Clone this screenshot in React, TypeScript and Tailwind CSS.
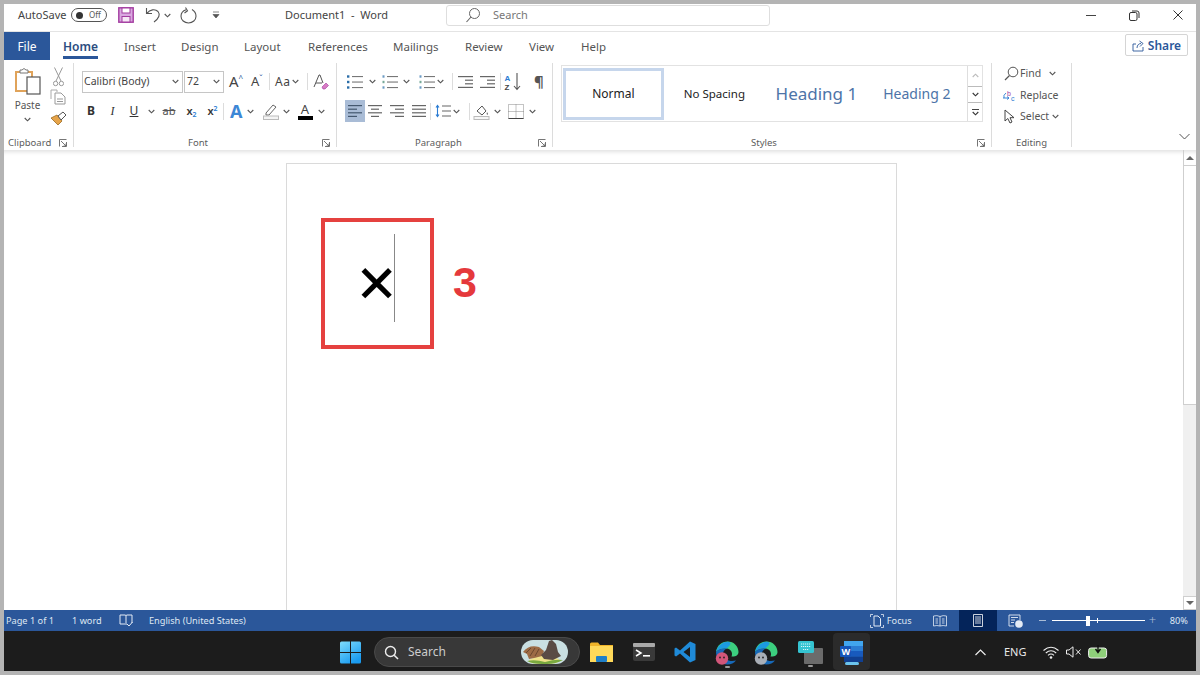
import type { ReactNode } from "react";

const sans = "font-['Noto_Sans',sans-serif]";

function Chev({ color = "#555", className = "" }: { color?: string; className?: string }) {
  return (
    <svg width="7" height="5" viewBox="0 0 7 5" className={className}>
      <path d="M0.7 1 L3.5 3.8 L6.3 1" fill="none" stroke={color} strokeWidth="1.1" />
    </svg>
  );
}

function Launcher() {
  return (
    <svg width="8" height="8" viewBox="0 0 8 8">
      <path d="M0.5 7.5 V0.5 H7.5 M7.5 3 V7.5 H3 M2 2 L7 7 M4.5 7 H7 V4.5" fill="none" stroke="#666" strokeWidth="0.9" />
    </svg>
  );
}

function Lines({ widths, color = "#666" }: { widths: number[][]; color?: string }) {
  return (
    <svg width="16" height="14" viewBox="0 0 16 14">
      {widths.map(([x, w], i) => (
        <rect key={i} x={x} y={1 + i * 3.6} width={w} height="1.2" fill={color} />
      ))}
    </svg>
  );
}

function Group({ label, className, children, labelClass = "justify-center", launcher = true }: {
  label: string;
  className: string;
  children: ReactNode;
  labelClass?: string;
  launcher?: boolean;
}) {
  return (
    <div className={`my-[3px] flex h-[84px] flex-col border-r border-[#dcdcdc] ${className}`}>
      <div className="flex-1">{children}</div>
      <div className={`mb-[-2px] flex h-[13px] items-center text-[9.5px] leading-none text-[#5c5c5c] ${labelClass}`}>
        <span>{label}</span>
        {launcher && (
          <span className="ml-auto mr-[6px] flex">
            <Launcher />
          </span>
        )}
      </div>
    </div>
  );
}

function TitleBar() {
  return (
    <div className="flex h-[28px] shrink-0 items-center border-b border-[#e4e4e4] bg-white pb-[5px] pl-[14px] text-[11px] text-[#444]">
      <span className="w-[53px]">AutoSave</span>
      <div className="flex h-[14px] w-[36px] items-center rounded-full border border-[#555] pl-[4px]">
        <span className="h-[7px] w-[7px] rounded-full bg-[#333]" />
        <span className="ml-[6px] text-[8px] leading-none text-[#555]">Off</span>
      </div>
      <svg width="16" height="16" viewBox="0 0 16 16" className="ml-[11px]">
        <rect x="0.8" y="0.8" width="14.4" height="14.4" fill="#d9a8e0" stroke="#a23b9f" strokeWidth="1.4" />
        <rect x="4" y="1" width="8" height="5" fill="#fff" stroke="#a23b9f" />
        <rect x="4" y="9.5" width="8" height="5.5" fill="#f6e7f6" stroke="#a23b9f" />
      </svg>
      <svg width="16" height="16" viewBox="0 0 16 16" className="ml-[11px]">
        <path d="M1.5 1 V6.5 H7 M1.8 6.3 C5 2.5 10 1.5 13 4.5 C15.5 7.5 14 11.5 9 15" fill="none" stroke="#555" strokeWidth="1.1" />
      </svg>
      <Chev className="ml-[3px]" />
      <svg width="17" height="17" viewBox="0 0 17 17" className="ml-[9px]">
        <path d="M6 2.8 C2.5 4 1 7 1 9.2 C1 13 4.3 16 8.5 16 C12.7 16 16 13 16 9.2 C16 6.5 14.5 4 12 2.5 M5.5 0.5 L7.5 3.8 L4.5 6" fill="none" stroke="#555" strokeWidth="1.1" />
      </svg>
      <svg width="8" height="8" viewBox="0 0 8 8" className="ml-[15px]">
        <path d="M1 1 H7 M1 3.5 H7 L4 7 Z" fill="#555" stroke="#555" strokeWidth="0.7" />
      </svg>
      <span className="ml-[65px] w-[161px]">Document1&nbsp; -&nbsp; Word</span>
      <div className="flex h-[21px] w-[324px] items-center rounded-[3px] border border-[#dedede] pl-[18px]">
        <svg width="16" height="16" viewBox="0 0 16 16">
          <circle cx="9.5" cy="6.5" r="5" fill="none" stroke="#666" strokeWidth="1" />
          <path d="M6 10 L1.5 15" stroke="#666" strokeWidth="1.1" />
        </svg>
        <span className="ml-[12px] text-[#777]">Search</span>
      </div>
      <div className="ml-auto flex items-center pr-[13px]">
        <div className="h-px w-[10px] bg-[#444]" />
        <svg width="11" height="11" viewBox="0 0 11 11" className="ml-[33px]">
          <rect x="0.5" y="2.5" width="7.5" height="8" rx="1.5" fill="#fff" stroke="#333" />
          <path d="M3 1 H8 Q10 1 10 3 V8" fill="none" stroke="#333" />
        </svg>
        <svg width="10" height="10" viewBox="0 0 10 10" className="ml-[33px]">
          <path d="M0.5 0.5 L9.5 9.5 M9.5 0.5 L0.5 9.5" stroke="#333" strokeWidth="1" />
        </svg>
      </div>
    </div>
  );
}

const tabs = [
  { name: "Insert", w: "w-[57px]" },
  { name: "Design", w: "w-[63px]" },
  { name: "Layout", w: "w-[64px]" },
  { name: "References", w: "w-[85px]" },
  { name: "Mailings", w: "w-[72px]" },
  { name: "Review", w: "w-[64px]" },
  { name: "View", w: "w-[52px]" },
  { name: "Help", w: "w-[52px]" },
];

function TabRow() {
  return (
    <div className="flex h-[28px] shrink-0 items-stretch bg-white text-[11.5px] text-[#555]">
      <div className="flex w-[46px] items-center justify-center bg-[#2b579a] pt-px text-[12px] text-white">File</div>
      <div className="ml-[13px] w-[61px] pt-[6px]">
        <div className="h-[18px] text-[12px] font-semibold leading-[18px] text-[#2b4c80]">Home</div>
        <div className="h-[2.5px] w-[35px] bg-[#2b579a]" />
      </div>
      {tabs.map((t) => (
        <div key={t.name} className={`flex items-center pt-px ${t.w}`}>
          {t.name}
        </div>
      ))}
      <div className="ml-auto mr-[8px] mt-[2px] flex h-[22px] w-[63px] items-center justify-center gap-[4px] self-start rounded-[2px] border border-[#d5d5d5] pt-px text-[12px] font-semibold text-[#2b579a]">
        <svg width="12" height="12" viewBox="0 0 12 12">
          <path d="M4 4 H1 V11 H11 V7 M5 8 C5 5 7 3.5 9 3.5 M7.5 1 L11 3.5 L8 6.5" fill="none" stroke="#2b579a" strokeWidth="0.9" />
        </svg>
        Share
      </div>
    </div>
  );
}

function ClipboardGroup() {
  return (
    <Group label="Clipboard" className="w-[70px]" labelClass="pl-[4px]">
      <div className="flex">
        <div className="ml-[9px] flex w-[29px] flex-col items-center pt-[4px]">
          <svg width="27" height="28" viewBox="0 0 27 28">
            <path d="M2 5 H18 V24 H2 Z" fill="#fff" stroke="#e0a35a" strokeWidth="2" />
            <path d="M6 6 V3 H8 Q10 0 12 3 H14 V6 Z" fill="#fff" stroke="#777" />
            <rect x="13" y="10" width="13" height="17" fill="#fff" stroke="#555" strokeWidth="1.2" />
          </svg>
          <span className="mt-[3px] text-[10px] leading-[14px] text-[#555]">Paste</span>
          <Chev className="mt-[5px]" />
        </div>
        <div className="ml-[7px] flex w-[18px] flex-col items-center pt-[4px]">
          <svg width="11" height="20" viewBox="0 0 11 20">
            <path d="M1.5 0.5 L8 14 M9.5 0.5 L3 14" stroke="#999" strokeWidth="1" fill="none" />
            <circle cx="2.6" cy="16.5" r="2.2" fill="none" stroke="#999" />
            <circle cx="8.4" cy="16.5" r="2.2" fill="none" stroke="#999" />
          </svg>
          <svg width="16" height="16" viewBox="0 0 16 16" className="mt-[2px]">
            <path d="M1 10 V1 H7 V3" fill="none" stroke="#aaa" />
            <path d="M5 4 H11 L15 8 V15 H5 Z M7 10 H13 M7 12.5 H13" fill="#fff" stroke="#999" />
          </svg>
          <svg width="17" height="15" viewBox="0 0 17 15" className="mt-[6px]">
            <path d="M1 7 L7 4 L12 10 L8 14 Z" fill="#e6a44a" stroke="#9a6a20" strokeWidth="0.8" />
            <path d="M8 5 L13 1 L16 4 L11 9 Z" fill="#fff" stroke="#555" />
          </svg>
        </div>
      </div>
    </Group>
  );
}

function FontGroup() {
  return (
    <Group label="Font" className="w-[263px]" labelClass="justify-start pl-[114px]">
      <div className="box-content flex h-[21px] items-center pl-[8px] pt-[8px]">
        <div className="flex h-[22px] w-[101px] items-center justify-between border border-[#c6c6c6] pl-[1px] pr-[3px] text-[10.5px] text-[#444]">
          Calibri (Body) <Chev />
        </div>
        <div className="ml-[1px] flex h-[22px] w-[40px] items-center justify-between border border-[#c6c6c6] pl-[2px] pr-[3px] text-[10.5px] text-[#444]">
          72 <Chev />
        </div>
        <span className="ml-[5px] w-[22px] text-[15px] leading-none text-[#444]">
          A<span className="align-top text-[8px] text-[#2b579a]">^</span>
        </span>
        <span className="w-[18px] text-[13px] leading-none text-[#444]">
          A<span className="align-top text-[8px] text-[#2b579a]">ˇ</span>
        </span>
        <div className="h-[17px] w-px bg-[#dcdcdc]" />
        <span className="ml-[5px] flex w-[32px] items-center gap-[2px] text-[12px] tracking-[0.5px] text-[#444]">
          Aa <Chev />
        </span>
        <div className="h-[17px] w-px bg-[#dcdcdc]" />
        <svg width="16" height="16" viewBox="0 0 16 16" className="ml-[5px]">
          <path d="M1 13 L6 1 H7 L10 9 M3 9 H9" fill="none" stroke="#555" />
          <path d="M9 13 L13 9 L15.5 11.5 L12 15 H10 Z" fill="#d77cc4" stroke="#a23b9f" strokeWidth="0.6" />
        </svg>
      </div>
      <div className="mt-[8px] flex h-[22px] items-center pl-[7px] text-[12px] text-[#333]">
        <span className="w-[20px] text-center font-bold">B</span>
        <span className="ml-px w-[21px] text-center font-['Liberation_Serif',serif] italic">I</span>
        <span className="w-[22px] text-center underline">U</span>
        <span className="flex w-[12px] justify-center"><Chev /></span>
        <span className="w-[24px] text-center text-[11px] text-[#555] line-through">ab</span>
        <span className="w-[21px] text-center text-[11px] font-semibold">
          x<sub className="text-[7px] text-[#2b7cd3]">2</sub>
        </span>
        <span className="w-[21px] text-center text-[11px] font-semibold">
          x<sup className="text-[7px] text-[#2b7cd3]">2</sup>
        </span>
        <div className="h-[17px] w-px bg-[#dcdcdc]" />
        <span className="ml-[6px] w-[15px] text-[18px] font-bold leading-none text-[#3d87d6]">A</span>
        <span className="ml-[2px] flex w-[16px]"><Chev /></span>
        <svg width="16" height="17" viewBox="0 0 16 17">
          <path d="M3 10 L10 2 L13 4 L6 12 L3 12 Z" fill="#fff" stroke="#666" />
          <rect x="0.5" y="13" width="15" height="3.5" fill="#f4f4f4" stroke="#bbb" />
        </svg>
        <span className="ml-[4px] w-[13px]"><Chev /></span>
        <span className="flex w-[18px] flex-col items-center">
          <span className="text-[13px] leading-[13px] text-[#444]">A</span>
          <span className="h-[4px] w-[15px] bg-black" />
        </span>
        <span className="flex w-[15px] justify-center"><Chev /></span>
      </div>
    </Group>
  );
}

function BulletIcon({ marks }: { marks: string }) {
  return (
    <svg width="16" height="14" viewBox="0 0 16 14">
      {[1.5, 7, 12.5].map((y, i) => (
        <g key={y}>
          {marks === "dot" ? (
            <rect x="0" y={y - 1.2} width="2.4" height="2.4" fill="#2b6ea8" />
          ) : (
            <rect x="0.5" y={y - 1.2} width="2" height="2.4" fill={i === 1 ? "#7a9" : "#6b9ac4"} />
          )}
          <rect x="5" y={y - 0.5} width="11" height="1.1" fill="#777" />
        </g>
      ))}
    </svg>
  );
}

function ParagraphGroup() {
  return (
    <Group label="Paragraph" className="w-[216px]" labelClass="pl-[78px]">
      <div className="box-content flex h-[21px] items-center pl-[10px] pt-[8px]">
        <BulletIcon marks="dot" />
        <span className="ml-[6px] w-[13px]"><Chev /></span>
        <BulletIcon marks="num" />
        <span className="ml-[5px] w-[16px]"><Chev /></span>
        <BulletIcon marks="num" />
        <span className="ml-[2px] w-[15px]"><Chev /></span>
        <div className="h-[17px] w-px bg-[#dcdcdc]" />
        <span className="ml-[5px] flex w-[22px]">
          <Lines widths={[[0, 15], [7, 8], [7, 8], [0, 15]]} />
        </span>
        <span className="flex w-[20px]">
          <Lines widths={[[0, 15], [7, 8], [7, 8], [0, 15]]} />
        </span>
        <div className="h-[17px] w-px bg-[#dcdcdc]" />
        <svg width="18" height="20" viewBox="0 0 18 20" className="ml-[3px] font-['Liberation_Sans',sans-serif]">
          <text x="0.5" y="8.5" fontSize="8" fontWeight="700" fill="#2b7cd3">A</text>
          <text x="0.5" y="18" fontSize="8" fontWeight="700" fill="#444">Z</text>
          <path d="M13 1 V17 M10 14 L13 17.5 L16 14" fill="none" stroke="#555" strokeWidth="1.1" />
        </svg>
        <span className="ml-[12px] text-[15px] font-bold leading-none text-[#555]">¶</span>
      </div>
      <div className="mt-[8px] flex h-[22px] items-center pl-[8px]">
        <span className="flex h-[22px] w-[20px] items-center justify-center bg-[#a9bcd6]">
          <Lines widths={[[1, 14], [1, 9], [1, 14], [1, 9]]} color="#44586f" />
        </span>
        <span className="ml-[2px] w-[20px]"><Lines widths={[[1, 14], [4, 8], [1, 14], [4, 8]]} /></span>
        <span className="ml-[2px] w-[20px]"><Lines widths={[[1, 14], [6, 9], [1, 14], [6, 9]]} /></span>
        <span className="ml-[2px] w-[19px]"><Lines widths={[[1, 14], [1, 14], [1, 14], [1, 14]]} /></span>
        <div className="h-[17px] w-px bg-[#dcdcdc]" />
        <span className="ml-[4px] flex w-[18px] items-center">
          <svg width="16" height="14" viewBox="0 0 16 14">
            <path d="M2.5 2 V12 M1 3.5 L2.5 1.5 L4 3.5 M1 10.5 L2.5 12.5 L4 10.5" fill="none" stroke="#2b7cd3" strokeWidth="1.1" />
            <path d="M7 2 H16 M7 7 H16 M7 12 H16" stroke="#666" strokeWidth="1.2" />
          </svg>
        </span>
        <Chev />
        <div className="ml-[9px] h-[17px] w-px bg-[#dcdcdc]" />
        <svg width="17" height="17" viewBox="0 0 17 17" className="ml-[3px]">
          <path d="M4 8 L9 3 L13 8 L9 12 Z" fill="#fff" stroke="#555" />
          <path d="M14 9 Q15.5 11 14.5 12 Q13 11.5 14 9" fill="#555" />
          <rect x="1" y="13.5" width="15" height="3" fill="#f6f6f6" stroke="#bbb" />
        </svg>
        <span className="ml-[4px] w-[14px]"><Chev /></span>
        <svg width="16" height="15" viewBox="0 0 16 15">
          <rect x="0.5" y="0.5" width="15" height="14" fill="none" stroke="#888" strokeDasharray="1 1" />
          <path d="M8 0.5 V14.5 M0.5 7.5 H15.5" stroke="#888" strokeDasharray="1 1" />
          <path d="M0.5 14.5 H15.5" stroke="#444" />
        </svg>
        <span className="ml-[5px]"><Chev /></span>
      </div>
    </Group>
  );
}

function StylesGroup() {
  return (
    <Group label="Styles" className="w-[439px]" labelClass="pl-[198px]">
      <div className="ml-[8px] mt-[2px] flex h-[57px] w-[422px] items-center border border-[#e2e2e2] pl-px">
        <div className="flex h-[52px] w-[101px] items-center justify-center border-[3px] border-[#c6d6ec] text-[12px] text-[#222]">
          Normal
        </div>
        <span className="ml-[20px] w-[92px] text-[11.5px] text-[#222]">No Spacing</span>
        <span className="w-[108px] text-[17px] text-[#4d74a8]">Heading 1</span>
        <span className="w-[84px] text-[14px] text-[#4d74a8]">Heading 2</span>
        <div className="flex w-[15px] flex-col self-stretch border-l border-[#dedede]">
          <span className="flex h-[20px] items-center justify-center"><Chev color="#bbb" className="rotate-180" /></span>
          <span className="flex h-[18px] items-center justify-center border-y border-[#bbb]"><Chev color="#333" /></span>
          <span className="flex h-[18px] flex-col items-center justify-center">
            <span className="mb-px h-px w-[7px] bg-[#444]" />
            <Chev color="#333" />
          </span>
        </div>
      </div>
    </Group>
  );
}

function EditingGroup() {
  return (
    <Group label="Editing" className="w-[80px]" launcher={false}>
      <div className="pl-[10px] text-[10.5px] leading-[21.5px] text-[#555]">
        <div className="flex h-[21.5px] items-center">
          <svg width="15" height="15" viewBox="0 0 15 15" className="ml-[2px]">
            <circle cx="9" cy="6" r="4.8" fill="none" stroke="#555" />
            <path d="M5.5 9.5 L1 14" stroke="#555" strokeWidth="1.2" />
          </svg>
          <span className="ml-px w-[29px]">Find</span>
          <Chev />
        </div>
        <div className="flex h-[21.5px] items-center">
          <svg width="15" height="15" viewBox="0 0 15 15" className="font-['Liberation_Sans',sans-serif]">
            <text x="5" y="7.5" fontSize="7" fill="#a23b9f">b</text>
            <text x="9" y="13" fontSize="7" fill="#2b7cd3">c</text>
            <path d="M4 5 Q1 7 2 10 M1 10 H7 M5 8.5 L7 10 L5 11.5" fill="none" stroke="#2b7cd3" strokeWidth="0.9" />
          </svg>
          <span className="ml-[3px]">Replace</span>
        </div>
        <div className="flex h-[21.5px] items-center">
          <svg width="12" height="15" viewBox="0 0 12 15" className="ml-[2px]">
            <path d="M1 1 V12 L3.8 9.5 L6 14 L8 13 L6 8.7 H10 Z" fill="#fff" stroke="#444" />
          </svg>
          <span className="ml-[4px] mr-[3px]">Select</span>
          <Chev />
        </div>
      </div>
    </Group>
  );
}

function Ribbon() {
  return (
    <div className="flex h-[90px] shrink-0 bg-white text-[#444]">
      <ClipboardGroup />
      <FontGroup />
      <ParagraphGroup />
      <StylesGroup />
      <EditingGroup />
      <div className="ml-auto mr-[6px] flex items-end pb-[10px]">
        <svg width="11" height="7" viewBox="0 0 11 7">
          <path d="M0.5 1 L5.5 6 L10.5 1" fill="none" stroke="#555" />
        </svg>
      </div>
    </div>
  );
}

function DocArea() {
  return (
    <div className="flex h-[460px] shrink-0 bg-white shadow-[inset_0_5px_4px_-3px_rgba(0,0,0,0.12)]">
      <div className="ml-[282px] mt-[13px] w-[611px] border-x border-t border-[#dadada] pl-[34px] pt-[54px]">
        <div className="flex items-start">
          <div className="flex h-[131px] w-[113px] shrink-0 items-start border-4 border-[#e5413f] pl-[34px] pt-[12px]">
            <span className="flex h-[88px] w-[35px] items-center justify-center font-['Inter',sans-serif] text-[66px] font-normal leading-none text-black">
              ×
            </span>
            <span className="h-[88px] w-px bg-[#888]" />
          </div>
          <span className="ml-[19px] mt-[39px] font-['Liberation_Sans',sans-serif] text-[43px] font-bold leading-[50px] text-[#e5393c]">
            3
          </span>
        </div>
      </div>
      <div className="ml-auto flex w-[13px] flex-col">
        <div className="flex h-[16px] items-center justify-center border-b border-l border-[#cfcfcf]">
          <span className="h-0 w-0 border-x-[4px] border-b-[4px] border-x-transparent border-b-[#666]" />
        </div>
        <div className="h-[239px] border-b border-l border-[#cfcfcf] bg-white" />
        <div className="flex-1 bg-[#f0f0f0]" />
        <div className="flex h-[14px] items-center justify-center border border-r-0 border-[#cfcfcf] bg-white">
          <span className="h-0 w-0 border-x-[4px] border-t-[4px] border-x-transparent border-t-[#666]" />
        </div>
      </div>
    </div>
  );
}

function StatusBar() {
  return (
    <div className="flex h-[21px] shrink-0 items-center bg-[#2b579a] pl-[2px] text-[9.2px] text-[#dfe7f3]">
      <span className="w-[66px]">Page 1 of 1</span>
      <span className="w-[47px]">1 word</span>
      <svg width="14" height="13" viewBox="0 0 14 13">
        <path d="M1 1 H6 Q7 1 7 2 Q7 1 8 1 H13 V9 M7 2 V11 M1 1 V10 H6" fill="none" stroke="#e4ebf5" />
        <path d="M8 10 L10 12 L13.5 8" fill="none" stroke="#e4ebf5" />
      </svg>
      <span className="ml-[16px]">English (United States)</span>
      <div className="ml-auto flex h-full items-center">
        <svg width="14" height="14" viewBox="0 0 14 14">
          <path d="M0.5 3 V0.5 H3 M11 0.5 H13.5 V3 M0.5 11 V13.5 H3 M11 13.5 H13.5 V11" fill="none" stroke="#e4ebf5" strokeWidth="0.8" />
          <path d="M4 2 H8 L10.5 4.5 V12 H4 Z" fill="none" stroke="#e4ebf5" />
        </svg>
        <span className="ml-[3px] w-[46px]">Focus</span>
        <svg width="14" height="12" viewBox="0 0 14 12">
          <path d="M7 1.5 Q4 0 0.5 1 V11 Q4 10 7 11 Q10 10 13.5 11 V1 Q10 0 7 1.5 Z M7 1.5 V11 M2.5 4 H5 M2.5 6 H5 M2.5 8 H5 M9 4 H11.5 M9 6 H11.5 M9 8 H11.5" fill="none" stroke="#e4ebf5" strokeWidth="0.8" />
        </svg>
        <div className="ml-[12px] flex h-full w-[38px] items-center justify-center bg-[#04245a]">
          <svg width="10" height="13" viewBox="0 0 10 13">
            <path d="M0.5 0.5 H9.5 V12.5 H0.5 Z M2 3 H8 M2 5 H8 M2 7 H8 M2 9 H8" fill="none" stroke="#fff" strokeWidth="0.8" />
          </svg>
        </div>
        <svg width="15" height="14" viewBox="0 0 15 14" className="ml-[11px]">
          <path d="M6 12 H1 V1 H12 V6 M3 3.5 H10 M3 6 H7 M3 8.5 H6" fill="none" stroke="#e4ebf5" strokeWidth="0.9" />
          <circle cx="11" cy="10" r="3.8" fill="#e4ebf5" />
        </svg>
        <div className="ml-[16px] h-px w-[7px] bg-[#a9bcd6]" />
        <div className="ml-[6px] flex h-[10px] w-[93px] items-center">
          <div className="h-px w-[34px] bg-white" />
          <div className="h-[10px] w-[4px] bg-white" />
          <div className="h-px w-[7px] bg-white" />
          <div className="h-[5px] w-px bg-white" />
          <div className="h-px flex-1 bg-white" />
        </div>
        <span className="ml-[4px] w-[13px] text-[13px] font-light leading-none text-[#a9bcd6]">+</span>
        <span className="ml-[8px] mr-[8px]">80%</span>
      </div>
    </div>
  );
}

function EdgeIcon({ face }: { face: string }) {
  return (
    <svg width="24" height="24" viewBox="0 0 24 24">
      <path d="M1 11 C2 4 7 0.5 12.5 0.5 C19 0.5 23.5 5.5 23.5 11 C23.5 14.5 20 16 16.5 15.5 C18 12.5 16.5 8 11.5 7.5 C6.5 7 3 8.5 1 11 Z" fill="#3ccf7f" />
      <path d="M1 11 C3 3 10 0.2 14 0.9 C18 2 13 6 11.5 7.5 C6.5 7 3 8.5 1 11 Z" fill="#1c9be0" />
      <path d="M1 11 C1 18 6 23.5 12.5 23.5 C16 23.5 19 22 21 19.5 C15 21 9 19 8 14 C7.5 11 9 9 11.5 7.5 C6.5 7 3 8.5 1 11 Z" fill="#1769b8" />
      <circle cx="7" cy="17.5" r="6.2" fill={face} />
      <circle cx="5" cy="16.5" r="0.9" fill="#222" />
      <circle cx="9" cy="16.5" r="0.9" fill="#222" />
    </svg>
  );
}

function Taskbar() {
  return (
    <div className="flex h-[40px] shrink-0 items-center bg-[#1c1c1c] pt-[2px] text-[#e8e8e8]">
      <svg width="23" height="23" viewBox="0 0 23 23" className="ml-[335px]">
        <defs>
          <linearGradient id="win" x1="0" y1="0" x2="0.6" y2="1">
            <stop offset="0" stopColor="#7fdcfb" />
            <stop offset="1" stopColor="#1a9bf0" />
          </linearGradient>
        </defs>
        <path d="M1 2 Q1 0.5 2.5 0.5 H11 V11 H1 Z M12 0.5 H20.5 Q22 0.5 22 2 V11 H12 Z M1 12 H11 V22.5 H2.5 Q1 22.5 1 21 Z M12 12 H22 V21 Q22 22.5 20.5 22.5 H12 Z" fill="url(#win)" />
      </svg>
      <div className="ml-[12px] flex h-[30px] w-[206px] items-center rounded-full border border-[#4a4a4a] bg-[#383838] pl-[9px]">
        <svg width="15" height="15" viewBox="0 0 15 15">
          <circle cx="6.5" cy="6.5" r="5" fill="none" stroke="#eee" strokeWidth="1.4" />
          <path d="M10.2 10.2 L14 14" stroke="#eee" strokeWidth="1.6" />
        </svg>
        <span className="ml-[9px] text-[12px] text-[#ccc]">Search</span>
        <svg width="47" height="26" viewBox="0 0 47 26" className="ml-[75px]">
          <rect x="0" y="1" width="47" height="24" rx="12" fill="#c9dfe2" />
          <path d="M8 21 Q22 13 38 20 L36 24 Q22 26 10 24 Z" fill="#f0e28a" />
          <path d="M6 22 Q14 20 24 23 Q34 20 42 21 Q34 25.5 24 25 Q12 25.5 6 22" fill="#79a83f" />
          <path d="M2 13 Q8 5 18 8 L23 12 L21 17 Q14 19 8 20 L6 15 Z" fill="#9d6b45" />
          <path d="M5 14 L10 9 M9 17 L14 9 M14 17 L18 10" stroke="#5e3d28" strokeWidth="0.8" />
          <path d="M20 16 L25 11 L28 2 L31 1 L35 5 L37 13 L40 17 L32 21 L23 20 Z" fill="#5a4b45" />
        </svg>
      </div>
      <svg width="23" height="20" viewBox="0 0 23 20" className="ml-[10px]">
        <path d="M0 2 Q0 0.5 1.5 0.5 H8 L10 3 H23 V20 H0 Z" fill="#f0b429" />
        <rect x="0" y="4" width="23" height="16" fill="#ffd95a" />
        <rect x="6" y="14" width="11" height="6" rx="1" fill="#1f7fc8" />
      </svg>
      <svg width="22" height="18" viewBox="0 0 22 18" className="ml-[20px]">
        <rect width="22" height="18" rx="2" fill="#3a3a3a" />
        <rect width="22" height="4" rx="1" fill="#a9a9a9" />
        <path d="M3 7 L8 10 L3 13" fill="none" stroke="#fff" strokeWidth="1.5" />
        <rect x="10" y="12" width="7" height="1.6" fill="#fff" />
      </svg>
      <svg width="22" height="22" viewBox="0 0 22 22" className="ml-[19px]">
        <path d="M16 0.5 L21.5 3 V19 L16 21.5 L6 12.5 L2 15.5 L0.5 14.5 V7.5 L2 6.5 L6 9.5 Z M16 6 L9.5 11 L16 16 Z" fill="#1f8ad8" fillRule="evenodd" />
      </svg>
      <div className="ml-[19px] flex w-[24px] flex-col items-center pt-[5px]">
        <EdgeIcon face="#d2567a" />
        <span className="mt-[1px] h-[2.5px] w-[5px] rounded-full bg-[#9a9a9a]" />
      </div>
      <div className="ml-[15px] flex w-[24px] flex-col items-center pt-[5px]">
        <EdgeIcon face="#a9aeb6" />
        <span className="mt-[1px] h-[2.5px] w-[5px] rounded-full bg-transparent" />
      </div>
      <div className="ml-[20px] flex w-[25px] flex-col items-center pt-[4px]">
        <svg width="25" height="23" viewBox="0 0 25 23">
          <rect x="6" y="7" width="19" height="16" rx="1" fill="#6b6b6b" />
          <rect x="0" y="0" width="16" height="12" rx="1.5" fill="#35c4d2" />
          <path d="M3 3 H13 M3 5.5 H13 M5 8.5 H11" stroke="#d6f6fa" strokeWidth="1" strokeDasharray="1.2 0.8" />
        </svg>
        <span className="mt-[1px] h-[2.5px] w-[5px] rounded-full bg-[#9a9a9a]" />
      </div>
      <div className="ml-[10px] flex h-[37px] w-[37px] flex-col items-center self-start rounded-[4px] bg-[#2b2b2b] pt-[8px]">
        <svg width="23" height="21" viewBox="0 0 23 21">
          <rect x="4" y="0" width="19" height="21" rx="1.5" fill="#2b7cd3" />
          <rect x="4" y="0" width="19" height="5" fill="#41a5ee" />
          <rect x="4" y="10" width="19" height="5.5" fill="#185abd" />
          <rect x="4" y="15.5" width="19" height="5.5" fill="#103f91" />
          <rect x="0" y="5" width="11" height="11" rx="1" fill="#1454b8" />
          <text x="1.5" y="14" fontSize="9" fontWeight="700" fill="#fff">W</text>
        </svg>
        <span className="h-[3px] w-[14px] rounded-full bg-[#6cc4ee]" />
      </div>
      <svg width="11" height="7" viewBox="0 0 11 7" className="ml-[105px]">
        <path d="M0.5 6 L5.5 1 L10.5 6" fill="none" stroke="#eee" strokeWidth="1.2" />
      </svg>
      <span className="ml-[18px] text-[11px]">ENG</span>
      <svg width="16" height="13" viewBox="0 0 16 13" className="ml-[17px]">
        <path d="M0.5 4.5 Q8 -2 15.5 4.5 M2.8 7 Q8 2.5 13.2 7 M5 9.3 Q8 6.8 11 9.3" fill="none" stroke="#eee" strokeWidth="1.1" />
        <circle cx="8" cy="11.5" r="1.3" fill="#eee" />
      </svg>
      <svg width="15" height="12" viewBox="0 0 15 12" className="ml-[7px]">
        <path d="M0.5 4 H3 L7 0.8 V11.2 L3 8 H0.5 Z M10 3.5 L14.5 8.5 M14.5 3.5 L10 8.5" fill="none" stroke="#eee" />
      </svg>
      <svg width="20" height="14" viewBox="0 0 20 14" className="ml-[7px]">
        <rect x="0.6" y="3" width="18" height="10" rx="2.5" fill="#8fd07a" stroke="#eee" />
        <path d="M10 0 V6 M7.5 4 L10 7.5 L12.5 4" fill="none" stroke="#111" strokeWidth="1.4" />
      </svg>
    </div>
  );
}

export default function App() {
  return (
    <div className={`flex h-[675px] w-[1200px] flex-col overflow-hidden bg-[#b4b4b4] p-[4px] ${sans}`}>
      <TitleBar />
      <TabRow />
      <Ribbon />
      <DocArea />
      <StatusBar />
      <Taskbar />
    </div>
  );
}
